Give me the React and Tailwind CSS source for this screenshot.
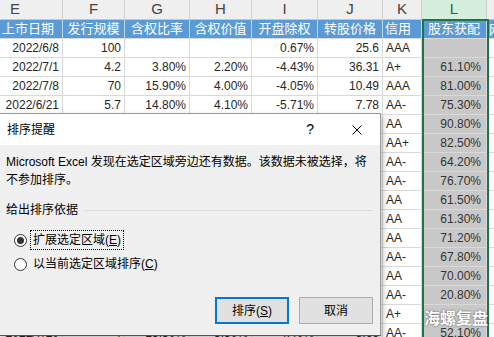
import React from 'react';

const rows = [
  ['2022/6/8', '100', '', '', '0.67%', '25.6', 'AAA', ''],
  ['2022/7/1', '4.2', '3.80%', '2.20%', '-4.43%', '36.31', 'A+', '61.10%'],
  ['2022/7/8', '70', '15.90%', '4.00%', '-4.05%', '10.49', 'AAA', '81.00%'],
  ['2022/6/21', '5.7', '14.80%', '4.10%', '-5.71%', '7.78', 'AA-', '75.30%'],
  ['2022/7/4', '8', '12.60%', '3.10%', '-3.22%', '12.05', 'AA', '90.80%'],
  ['2022/7/5', '12', '10.40%', '2.90%', '-2.86%', '9.87', 'AA+', '82.50%'],
  ['2022/7/6', '3.5', '16.20%', '4.30%', '-6.01%', '6.54', 'AA-', '64.20%'],
  ['2022/7/7', '6', '13.70%', '3.60%', '-4.72%', '8.31', 'AA-', '76.70%'],
  ['2022/7/11', '9.9', '11.20%', '3.30%', '-3.05%', '15.66', 'AA', '61.50%'],
  ['2022/7/12', '7.5', '14.10%', '3.80%', '-4.18%', '11.42', 'AA', '61.30%'],
  ['2022/7/13', '5', '15.30%', '4.20%', '-5.11%', '9.12', 'AA', '71.20%'],
  ['2022/7/14', '4.8', '12.90%', '3.40%', '-3.66%', '7.95', 'AA-', '67.80%'],
  ['2022/7/15', '10', '9.80%', '2.70%', '-2.41%', '13.28', 'AA', '70.00%'],
  ['2022/7/18', '3', '17.40%', '4.60%', '-6.35%', '6.02', 'AA-', '20.80%'],
  ['2022/7/19', '15', '8.70%', '2.50%', '-2.02%', '18.74', 'A+', ''],
  ['2022/7/20', '4', '13.30%', '3.50%', '-4.40%', '8.66', 'AA-', '52.10%'],
];

const widths = ['w-[63px]', 'w-[62px]', 'w-[65px]', 'w-[62px]', 'w-[66px]', 'w-[65px]', 'w-[39px]', 'w-[65px]'];
const letters = ['E', 'F', 'G', 'H', 'I', 'J', 'K', 'L'];
const heads = ['上市日期', '发行规模', '含权比率', '含权价值', '开盘除权', '转股价格', '信用', '股东获配'];

const Radio = ({ checked }) => (
  <span className="w-[13px] h-[13px] rounded-full border border-[#333] bg-white flex items-center justify-center shrink-0">
    {checked && <span className="w-[7px] h-[7px] rounded-full bg-[#333]" />}
  </span>
);

export default function App() {
  return (
    <div className="relative w-[494px] h-[337px] overflow-hidden bg-white font-['Liberation_Sans','Noto_Sans_CJK_SC',sans-serif] text-[12px] text-[#262626]">
      {/* column letters */}
      <div className="flex h-[20px] bg-[#efefef] border-b border-[#c6c6c6] text-[15px] text-[#444]">
        {letters.map((l, i) => (
          <div
            key={l}
            className={`${widths[i]} shrink-0 flex items-center border-r border-[#d0d0d0] ${
              i === 0 ? 'justify-start pl-[10px]' : 'justify-center'
            } ${i === 7 ? 'bg-[#d6eedd] text-[#1e6b40]' : ''}`}
          >
            {l}
          </div>
        ))}
        <div className="flex-1" />
      </div>

      {/* table header */}
      <div className="flex h-[19px] bg-[#5b9bd5] text-white text-[13px] border-b border-[#d9d9d9]">
        {heads.map((h, i) => (
          <div
            key={h}
            className={`${widths[i]} shrink-0 flex items-center border-r border-[#bdd7ee] ${
              i === 0 || i === 6 ? 'justify-start pl-[2px]' : 'justify-center'
            }`}
          >
            {h}
          </div>
        ))}
        <div className="flex-1 pl-[2px] whitespace-nowrap overflow-hidden">网下</div>
      </div>

      {/* data rows */}
      {rows.map((r, ri) => (
        <div key={ri} className="flex h-[19px] border-b border-[#d9d9d9]">
          {r.map((v, ci) => (
            <div
              key={ci}
              className={`${widths[ci]} shrink-0 flex items-center border-r border-[#d9d9d9] ${
                ci === 6 ? 'justify-start pl-[3px]' : 'justify-end pr-[3px]'
              } ${ci === 7 ? 'bg-[#c8c8c8] pr-[5px] text-[#333]' : ''}`}
            >
              {v}
            </div>
          ))}
          <div className="flex-1" />
        </div>
      ))}

      {/* selection box on column L */}
      <div className="absolute left-[422px] top-[19px] w-[67px] h-[330px] border-2 border-[#217346] pointer-events-none" />

      {/* watermark */}
      <div className="absolute left-[423px] top-[305px] w-[66px] text-center text-white text-[16px] font-bold font-['Noto_Sans_CJK_SC',sans-serif] [text-shadow:0_0_2px_rgba(0,0,0,0.7)]">
        海螺复盘
      </div>

      {/* sort warning dialog */}
      <div className="absolute left-[-1px] top-[113px] w-[382px] h-[223px] border border-[#9a9a9a] border-b-[#555] bg-[#f0f0f0] shadow-[2px_3px_6px_rgba(0,0,0,0.25)] flex flex-col text-[12px] text-black">
        <div className="h-[31px] bg-white flex items-center pl-[7px] pr-[18px]">
          <span className="flex-1">排序提醒</span>
          <span className="text-[14px] mr-[38px]">?</span>
          <svg width="10" height="10" viewBox="0 0 10 10" className="text-black">
            <path d="M0.5 0.5 L9.5 9.5 M9.5 0.5 L0.5 9.5" stroke="currentColor" strokeWidth="1" />
          </svg>
        </div>

        <div className="pl-[6px] pt-[8px] leading-[18px]">
          <div>Microsoft Excel 发现在选定区域旁边还有数据。该数据未被选择，将</div>
          <div>不参加排序。</div>
        </div>

        <div className="flex items-center pl-[6px] pr-[7px] mt-[12px] h-[18px]">
          <span>给出排序依据</span>
          <span className="flex-1 h-px bg-[#dcdcdc] ml-[6px]" />
        </div>

        <div className="flex items-center h-[20px] mt-[11px] pl-[14px]">
          <Radio checked />
          <span className="ml-[3px] px-[2px] h-[20px] flex items-center border border-dotted border-black">
            扩展选定区域(<span className="underline">E</span>)
          </span>
        </div>
        <div className="flex items-center h-[20px] mt-[4px] pl-[14px]">
          <Radio />
          <span className="ml-[6px]">
            以当前选定区域排序(<span className="underline">C</span>)
          </span>
        </div>

        <div className="flex justify-end gap-[10px] pr-[7px] mt-[23px]">
          <button className="w-[74px] h-[27px] bg-[#e1e1e1] border-2 border-[#0078d7] text-[12px]">
            排序(<span className="underline">S</span>)
          </button>
          <button className="w-[74px] h-[27px] bg-[#e1e1e1] border border-[#adadad] text-[12px]">
            取消
          </button>
        </div>
      </div>
    </div>
  );
}
